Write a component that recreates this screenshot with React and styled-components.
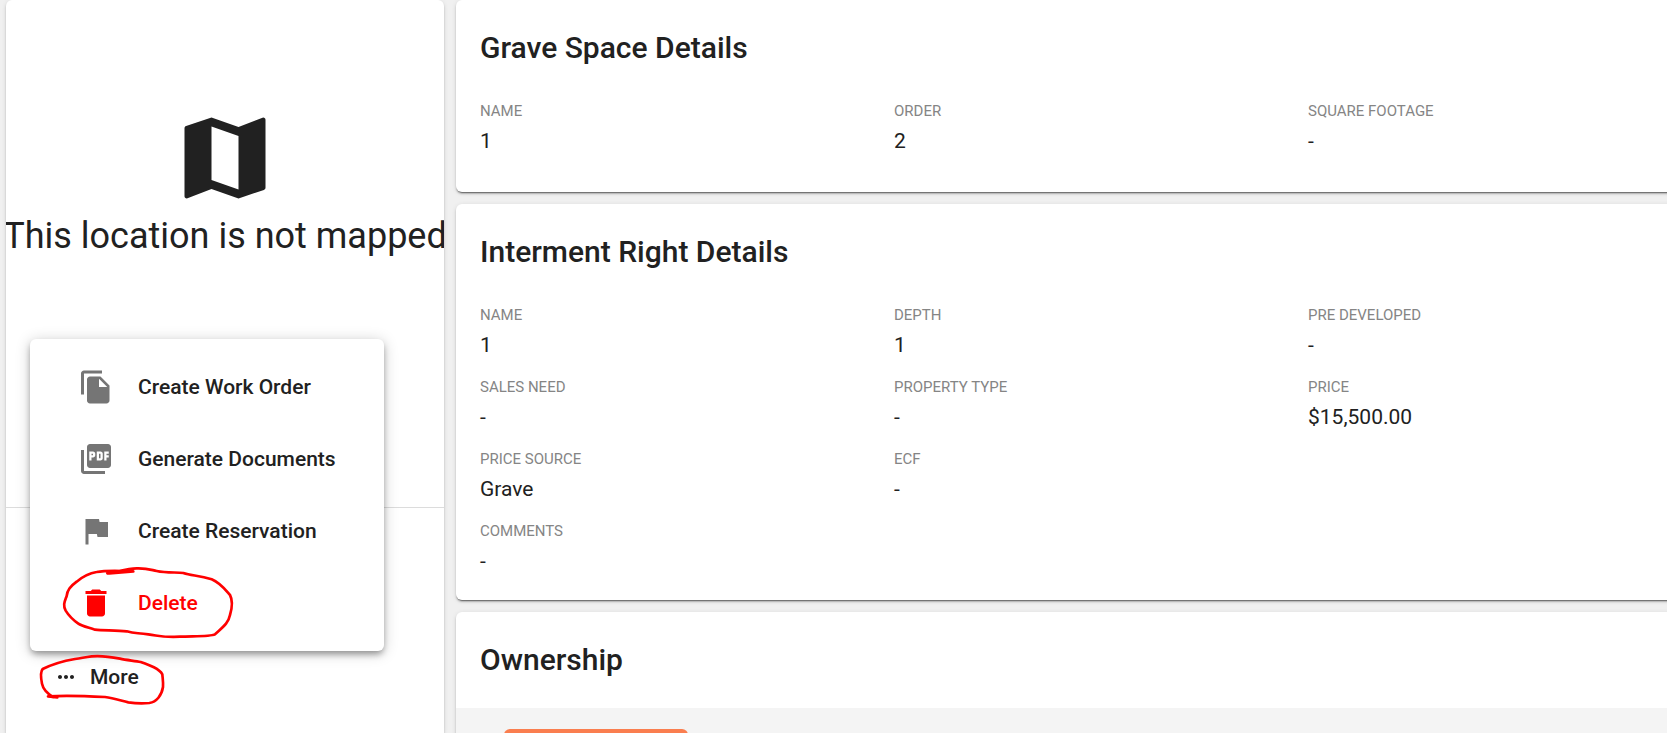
import React from 'react'

import styled, { createGlobalStyle } from 'styled-components'
import { MdDelete, MdFileCopy, MdFlag, MdMap, MdMoreHoriz, MdPictureAsPdf } from 'react-icons/md'

const graveFields = [
    { label: 'Name', value: '1' },
    { label: 'Order', value: '2' },
    { label: 'Square Footage', value: '-' },
]

const intermentFields = [
    { label: 'Name', value: '1' },
    { label: 'Depth', value: '1' },
    { label: 'Pre Developed', value: '-' },
    { label: 'Sales Need', value: '-' },
    { label: 'Property Type', value: '-' },
    { label: 'Price', value: '$15,500.00' },
    { label: 'Price Source', value: 'Grave' },
    { label: 'ECF', value: '-' },
    { label: 'Comments', value: '-', wide: true },
]

const Fields = ({ items }) => (
    <StyledFields>
        {items.map(({ label, value, wide }) => (
            <Field key={label} $wide={wide}>
                <dt>{label}</dt>
                <dd>{value}</dd>
            </Field>
        ))}
    </StyledFields>
)

const App = () => {
    return (
        <Page>
            <GlobalStyle />
            <Sidebar>
                <MapArea>
                    <MdMap size={108} />
                    <p>This location is not mapped</p>
                </MapArea>
                <Actions>
                    <Menu>
                        <MenuItem><MdFileCopy size={36} />Create Work Order</MenuItem>
                        <MenuItem><MdPictureAsPdf size={36} />Generate Documents</MenuItem>
                        <MenuItem><MdFlag size={36} />Create Reservation</MenuItem>
                        <MenuItem $danger>
                            <MdDelete size={36} />Delete
                            <Scribble viewBox="30 231 1062 216" aria-hidden="true">
                                <path d="M262 250 C290 246 320 236 350 235 C380 234 388 238 410 243 C440 250 470 246 490 249 C515 258 535 255 575 268 C600 278 615 298 630 315 C638 330 636 355 630 375 C625 400 610 410 585 433 C570 440 520 438 480 440 C425 442 430 440 385 433 C350 428 345 431 320 424 C290 420 250 422 225 419 C200 411 185 408 175 401 C155 387 145 375 137 362 C128 345 134 335 140 318 C142 300 150 290 170 275 C190 258 205 250 230 246 C260 240 300 242 340 244 L268 250" />
                            </Scribble>
                        </MenuItem>
                    </Menu>
                    <MoreButton>
                        <MdMoreHoriz size={24} />More
                        <Scribble viewBox="30 498 450 144" aria-hidden="true">
                            <path d="M112 631 L84 628 C130 625 200 627 255 630 C280 633 300 640 325 646 C350 650 370 650 388 648 C410 645 425 625 429 600 C430 585 428 575 427 562 C418 545 390 535 362 525 C345 521 320 520 300 515 C270 509 245 505 215 508 C190 511 185 514 165 516 C130 522 100 530 68 546 C60 555 62 570 66 590 C70 608 80 617 98 630" />
                        </Scribble>
                    </MoreButton>
                </Actions>
            </Sidebar>
            <Main>
                <Card $bottom="24px">
                    <h2>Grave Space Details</h2>
                    <Fields items={graveFields} />
                </Card>
                <Card $bottom="12px">
                    <h2>Interment Right Details</h2>
                    <Fields items={intermentFields} />
                </Card>
                <Card>
                    <h2>Ownership</h2>
                    <Owners>
                        <OwnerTag />
                    </Owners>
                </Card>
            </Main>
        </Page>
    )
}

export default App

const GlobalStyle = createGlobalStyle`
    * {
        box-sizing: border-box;
    }

    body {
        margin: 0;
        background: #f0f0f0;
        color: #212121;
        font-family: Roboto, "Liberation Sans", sans-serif;
    }
`

const Page = styled.div`
    display: flex;
    gap: 12px;
    height: 100vh;
    padding-left: 6px;
    overflow: hidden;
`

const cardShadow = '0 2px 1px -1px rgba(0, 0, 0, .4), 0 2px 2px rgba(0, 0, 0, .2), 0 1px 5px rgba(0, 0, 0, .1)'

const Sidebar = styled.aside`
    flex: 0 0 438px;
    min-width: 0;
    min-height: 100%;
    background: #fff;
    border-radius: 6px 6px 0 0;
    box-shadow: ${cardShadow};
`

const MapArea = styled.div`
    display: flex;
    flex-direction: column;
    align-items: center;
    height: 508px;
    padding-top: 104px;
    border-bottom: 1px solid #dcdcdc;
    overflow: hidden;

    svg {
        flex-shrink: 0;
    }

    p {
        margin: 0;
        font-size: 36px;
        line-height: 48px;
        white-space: nowrap;
    }
`

const Actions = styled.div`
    position: relative;
    padding: 145px 24px 24px;
`

/* opens upwards, over the map area */
const Menu = styled.div`
    position: absolute;
    left: 24px;
    right: 60px;
    top: -169px;
    padding: 12px 0;
    background: #fff;
    border-radius: 6px;
    box-shadow: 0 4px 6px -1px rgba(0, 0, 0, .35), 0 2px 15px rgba(0, 0, 0, .2);
`

const MenuItem = styled.button`
    position: relative;
    display: flex;
    align-items: center;
    gap: 24px;
    width: 100%;
    height: 72px;
    padding: 0 48px;
    border: 0;
    background: none;
    color: ${({ $danger }) => ($danger ? '#f00' : '#212121')};
    font: 500 21px/30px Roboto, "Liberation Sans", sans-serif;
    cursor: pointer;

    > svg:first-child {
        flex-shrink: 0;
        color: ${({ $danger }) => ($danger ? '#f00' : '#757575')};
    }
`

const MoreButton = styled.button`
    position: relative;
    display: flex;
    align-items: center;
    gap: 12px;
    width: 150px;
    height: 48px;
    padding: 0 24px;
    border: 0;
    background: none;
    color: #212121;
    font: 500 21px/30px Roboto, "Liberation Sans", sans-serif;
    cursor: pointer;
`

const Scribble = styled.svg`
    position: absolute;
    inset: 0;
    width: 100%;
    height: 100%;
    overflow: visible;
    pointer-events: none;

    path {
        fill: none;
        stroke: #f00;
        stroke-width: 8;
        stroke-linecap: round;
        stroke-linejoin: round;
    }
`

/* the cards run on past the right edge of the window */
const Main = styled.main`
    flex: 1;
    display: flex;
    flex-direction: column;
    gap: 12px;
    margin-right: -79px;
`

const Card = styled.section`
    flex-shrink: 0;
    padding-bottom: ${({ $bottom }) => $bottom || 0};
    background: #fff;
    border-radius: 6px;
    box-shadow: ${cardShadow};

    h2 {
        margin: 0;
        padding: 24px;
        font-size: 30px;
        line-height: 48px;
        font-weight: 500;
    }
`

const StyledFields = styled.dl`
    display: grid;
    grid-template-columns: repeat(3, 1fr);
    margin: 0;
    padding: 0 24px;
`

const Field = styled.div`
    grid-column: ${({ $wide }) => ($wide ? '1 / -1' : 'auto')};
    padding-bottom: 12px;

    dt {
        color: #858585;
        font-size: 15px;
        line-height: 30px;
        text-transform: uppercase;
    }

    dd {
        margin: 0;
        font-size: 21px;
        line-height: 30px;
    }
`

const Owners = styled.div`
    padding: 21px 48px;
    background: #f4f4f4;
`

const OwnerTag = styled.div`
    width: 184px;
    height: 48px;
    background: #fa7e4f;
    border-radius: 6px;
`
